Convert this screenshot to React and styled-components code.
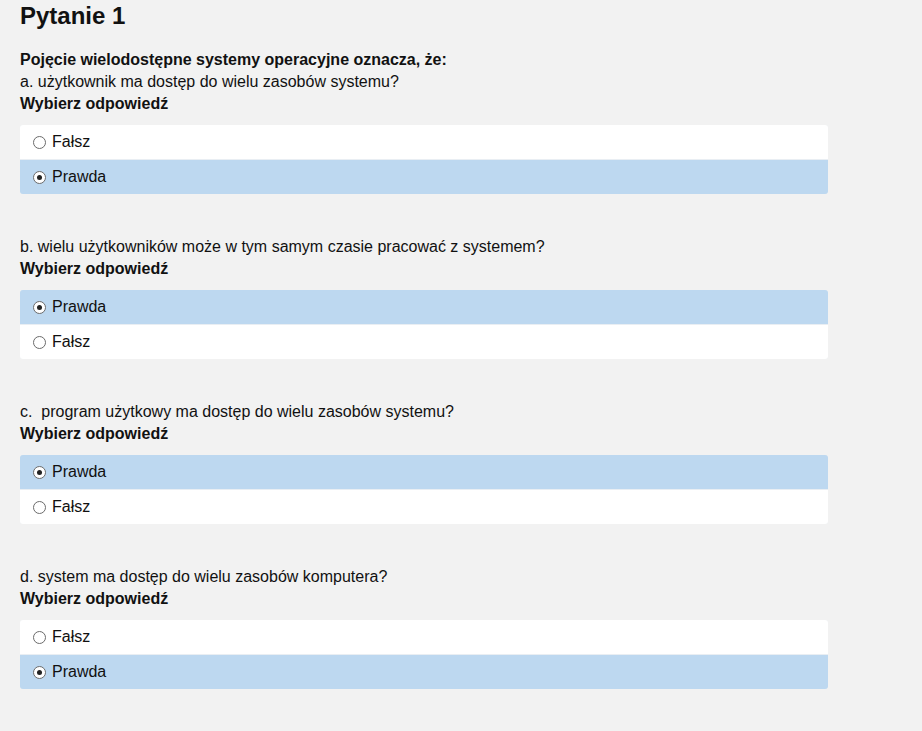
import React from "react";
import styled, { createGlobalStyle } from "styled-components";

const GlobalStyle = createGlobalStyle`
    html, body {
        margin: 0;
        padding: 0;
        background: #f2f2f2;
    }
    body {
        font-family: "Liberation Sans", Arial, sans-serif;
        color: #111;
    }
`;

const Page = styled.div`
    padding: 3px 20px 20px 20px;
    width: 808px;
`;

const Title = styled.h1`
    margin: 0;
    font-size: 24px;
    line-height: 26px;
    font-weight: bold;
`;

const Intro = styled.div`
    margin-top: 20px;
    font-size: 16px;
    line-height: 22px;
    font-weight: bold;
`;

const Group = styled.div`
    margin-bottom: 42px;
`;

const Statement = styled.div`
    font-size: 16px;
    line-height: 22px;
    white-space: pre;
`;

const Prompt = styled.div`
    font-size: 16px;
    line-height: 22px;
    font-weight: bold;
`;

const Options = styled.div`
    margin-top: 10px;
    display: flex;
    flex-direction: column;
    gap: 1px;
    background: #e9eef3;
    border-radius: 3px;
    overflow: hidden;
`;

const Option = styled.label`
    display: flex;
    align-items: center;
    height: 34px;
    padding-left: 13px;
    font-size: 16px;
    background: ${(p) => (p.$selected ? "#bdd8f0" : "#ffffff")};
`;

const Radio = styled.span`
    box-sizing: border-box;
    width: 13px;
    height: 13px;
    border-radius: 50%;
    border: 1px solid #6b6b6b;
    background: #fff;
    margin-right: 6px;
    display: flex;
    align-items: center;
    justify-content: center;
    &::after {
        content: "";
        width: 5px;
        height: 5px;
        border-radius: 50%;
        background: ${(p) => (p.$checked ? "#222" : "transparent")};
    }
`;

const questions = [
    { text: "a. użytkownik ma dostęp do wielu zasobów systemu?", options: ["Fałsz", "Prawda"], chosen: "Prawda" },
    { text: "b. wielu użytkowników może w tym samym czasie pracować z systemem?", options: ["Prawda", "Fałsz"], chosen: "Prawda" },
    { text: "c.  program użytkowy ma dostęp do wielu zasobów systemu?", options: ["Prawda", "Fałsz"], chosen: "Prawda" },
    { text: "d. system ma dostęp do wielu zasobów komputera?", options: ["Fałsz", "Prawda"], chosen: "Prawda" },
];

export default function App() {
    return (
        <>
            <GlobalStyle />
            <Page>
                <Title>Pytanie 1</Title>
                <Intro>Pojęcie wielodostępne systemy operacyjne oznacza, że:</Intro>
                {questions.map((q) => (
                    <Group key={q.text}>
                        <Statement>{q.text}</Statement>
                        <Prompt>Wybierz odpowiedź</Prompt>
                        <Options>
                            {q.options.map((o) => (
                                <Option key={o} $selected={o === q.chosen}>
                                    <Radio $checked={o === q.chosen} />
                                    {o}
                                </Option>
                            ))}
                        </Options>
                    </Group>
                ))}
            </Page>
        </>
    );
}
